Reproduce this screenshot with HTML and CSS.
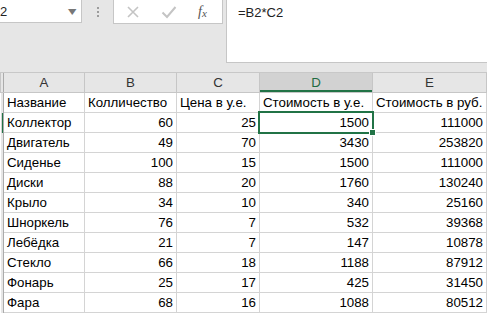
FILE: index.html
```html
<!DOCTYPE html>
<html lang="ru">
<head>
  <meta charset="UTF-8">
  <title>Лист1</title>
  <link rel="stylesheet" href="styles.css">
</head>
<body>
  <div class="toolbar">
    <div class="name-box"><span class="cell-ref">2</span><span class="drop">&#9662;</span></div>
    <div class="grip"><i></i><i></i><i></i></div>
    <div class="func-box">
      <svg class="ico" width="14" height="14" viewBox="0 0 14 14"><path d="M2 2 L12 12 M12 2 L2 12" stroke="#c4c4c4" stroke-width="1.6" fill="none"/></svg>
      <svg class="ico" width="16" height="14" viewBox="0 0 16 14"><path d="M1.5 7.5 L6 12 L14.5 2" stroke="#c4c4c4" stroke-width="2" fill="none"/></svg>
      <span class="fx">f<sub>x</sub></span>
    </div>
    <div class="formula">=B2*C2</div>
  </div>

  <table class="sheet">
    <colgroup>
      <col class="c-row"><col class="c-a"><col class="c-b"><col class="c-c"><col class="c-d"><col class="c-e"><col>
    </colgroup>
    <tr class="heads">
      <th class="rh"></th><th>A</th><th>B</th><th>C</th><th class="active">D</th><th>E</th><th></th>
    </tr>
    <tr><th class="rh"></th><td>Название</td><td>Колличество</td><td>Цена в у.е.</td><td>Стоимость в у.е.</td><td>Стоимость в руб.</td><td></td></tr>
    <tr><th class="rh active"></th><td>Коллектор</td><td class="n">60</td><td class="n">25</td><td class="n sel">1500</td><td class="n">111000</td><td></td></tr>
    <tr><th class="rh"></th><td>Двигатель</td><td class="n">49</td><td class="n">70</td><td class="n">3430</td><td class="n">253820</td><td></td></tr>
    <tr><th class="rh"></th><td>Сиденье</td><td class="n">100</td><td class="n">15</td><td class="n">1500</td><td class="n">111000</td><td></td></tr>
    <tr><th class="rh"></th><td>Диски</td><td class="n">88</td><td class="n">20</td><td class="n">1760</td><td class="n">130240</td><td></td></tr>
    <tr><th class="rh"></th><td>Крыло</td><td class="n">34</td><td class="n">10</td><td class="n">340</td><td class="n">25160</td><td></td></tr>
    <tr><th class="rh"></th><td>Шноркель</td><td class="n">76</td><td class="n">7</td><td class="n">532</td><td class="n">39368</td><td></td></tr>
    <tr><th class="rh"></th><td>Лебёдка</td><td class="n">21</td><td class="n">7</td><td class="n">147</td><td class="n">10878</td><td></td></tr>
    <tr><th class="rh"></th><td>Стекло</td><td class="n">66</td><td class="n">18</td><td class="n">1188</td><td class="n">87912</td><td></td></tr>
    <tr><th class="rh"></th><td>Фонарь</td><td class="n">25</td><td class="n">17</td><td class="n">425</td><td class="n">31450</td><td></td></tr>
    <tr><th class="rh"></th><td>Фара</td><td class="n">68</td><td class="n">16</td><td class="n">1088</td><td class="n">80512</td><td></td></tr>
  </table>
</body>
</html>
```

FILE: styles.css
```css
body {
  margin: 0;
  font-family: 'Liberation Sans', Arial, sans-serif;
  background: #fff;
  color: #000;
  overflow: hidden;
}
.toolbar {
  display: flex;
  align-items: flex-start;
  background: #e6e6e6;
  height: 73px;
  border-bottom: 1px solid #c8c8c8;
  box-sizing: border-box;
}
.name-box {
  width: 82px;
  height: 23px;
  background: #fff;
  border-right: 1px solid #c6c6c6;
  border-bottom: 1px solid #c6c6c6;
  box-sizing: border-box;
  display: flex;
  align-items: center;
  justify-content: space-between;
  font-size: 13px;
  color: #222;
}
.drop {
  color: #777;
  font-size: 12px;
  margin-right: 6px;
  transform: scaleX(1.4);
}
.grip {
  width: 31px;
  height: 23px;
  display: flex;
  flex-direction: column;
  align-items: center;
  justify-content: center;
  gap: 2px;
}
.grip i {
  width: 2px;
  height: 2px;
  background: #9c9c9c;
}
.func-box {
  width: 110px;
  height: 24px;
  background: #fff;
  border: 1px solid #c6c6c6;
  border-top: none;
  box-sizing: border-box;
  display: flex;
  align-items: center;
  gap: 21px;
  padding-left: 12px;
}
.fx {
  font-family: 'Liberation Serif', serif;
  font-style: italic;
  font-size: 14px;
  color: #555;
}
.fx sub {
  font-size: 11px;
  vertical-align: -1px;
}
.formula {
  flex: 1;
  margin-left: 3px;
  height: 63px;
  background: #fff;
  border-left: 1px solid #c6c6c6;
  border-bottom: 1px solid #c6c6c6;
  box-sizing: border-box;
  padding: 5px 0 0 11px;
  font-size: 13px;
  color: #222;
}
.sheet {
  border-collapse: collapse;
  table-layout: fixed;
  width: 520px;
  font-size: 13.3px;
}
.c-row { width: 3px; }
.c-a { width: 81px; }
.c-b { width: 92px; }
.c-c { width: 83px; }
.c-d { width: 113px; }
.c-e { width: 114px; }
.sheet td {
  height: 19px;
  padding: 0 3px;
  border: 1px solid #d4d4d4;
  white-space: nowrap;
  overflow: hidden;
}
.sheet td.n {
  text-align: right;
}
.heads th {
  height: 19px;
  background: #e6e6e6;
  border: 1px solid #c6c6c6;
  border-top: none;
  font-weight: normal;
  font-size: 13.3px;
  color: #333;
  padding: 0;
}
.heads th.active {
  background: #d2d2d2;
  color: #1e6b41;
  box-shadow: inset 0 -2px 0 #217346;
}
th.rh {
  background: #e6e6e6;
  border-right: 1px solid #ababab;
  padding: 0;
}
th.rh.active {
  background: #d2d2d2;
  box-shadow: inset -1px 0 0 #217346;
}
.sheet td.sel {
  position: relative;
  overflow: visible;
}
td.sel::after {
  content: '';
  position: absolute;
  left: -2px;
  top: -2px;
  right: -2px;
  bottom: -2px;
  border: 2px solid #217346;
  z-index: 2;
}
td.sel::before {
  content: '';
  position: absolute;
  right: -4px;
  bottom: -4px;
  width: 5px;
  height: 5px;
  background: #217346;
  border: 1px solid #fff;
  z-index: 3;
}
```
